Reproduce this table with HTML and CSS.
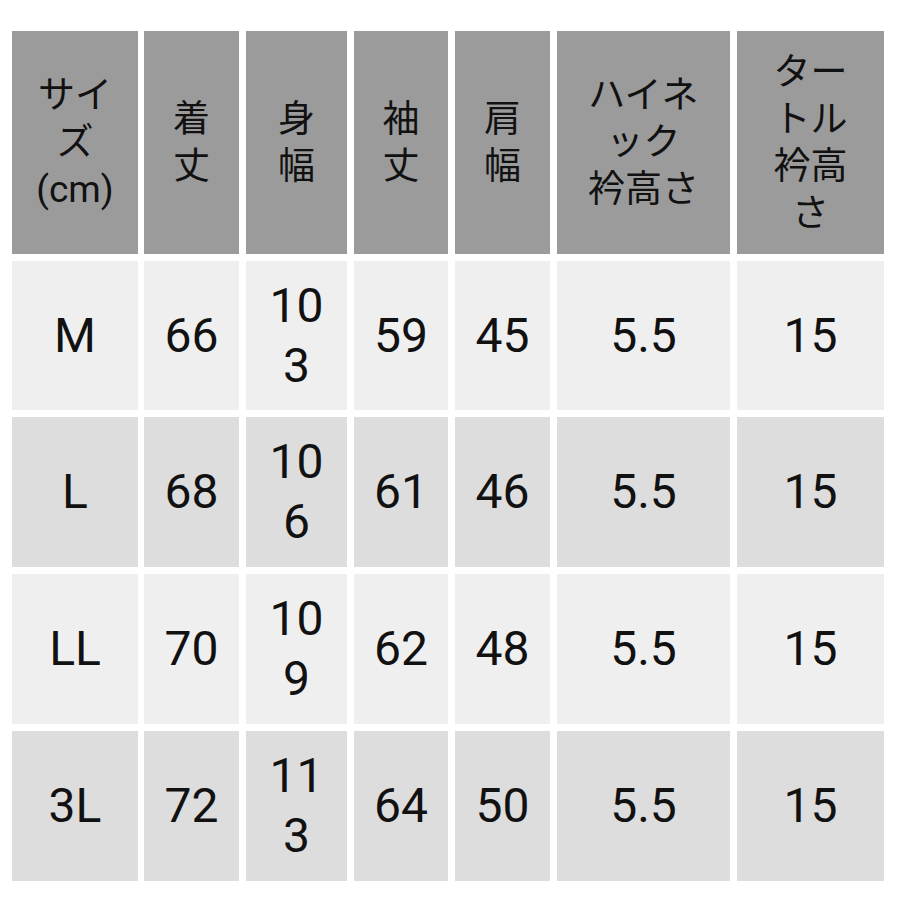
FILE: index.html
```html
<!DOCTYPE html>
<html lang="ja">
<head>
<meta charset="utf-8">
<title>サイズ表</title>
<link rel="stylesheet" href="styles.css">
</head>
<body>
<div class="size-table">
  <div class="cell head">サイ<br>ズ<br>(cm)</div>
  <div class="cell head">着<br>丈</div>
  <div class="cell head">身<br>幅</div>
  <div class="cell head">袖<br>丈</div>
  <div class="cell head">肩<br>幅</div>
  <div class="cell head">ハイネ<br>ック<br>衿高さ</div>
  <div class="cell head">ター<br>トル<br>衿高<br>さ</div>

  <div class="cell light">M</div>
  <div class="cell light">66</div>
  <div class="cell light">10<br>3</div>
  <div class="cell light">59</div>
  <div class="cell light">45</div>
  <div class="cell light">5.5</div>
  <div class="cell light">15</div>

  <div class="cell dark">L</div>
  <div class="cell dark">68</div>
  <div class="cell dark">10<br>6</div>
  <div class="cell dark">61</div>
  <div class="cell dark">46</div>
  <div class="cell dark">5.5</div>
  <div class="cell dark">15</div>

  <div class="cell light">LL</div>
  <div class="cell light">70</div>
  <div class="cell light">10<br>9</div>
  <div class="cell light">62</div>
  <div class="cell light">48</div>
  <div class="cell light">5.5</div>
  <div class="cell light">15</div>

  <div class="cell dark">3L</div>
  <div class="cell dark">72</div>
  <div class="cell dark">11<br>3</div>
  <div class="cell dark">64</div>
  <div class="cell dark">50</div>
  <div class="cell dark">5.5</div>
  <div class="cell dark">15</div>
</div>
</body>
</html>
```
FILE: styles.css
```css
html, body {
  margin: 0;
  padding: 0;
  background: #ffffff;
}

body {
  width: 900px;
  height: 900px;
  overflow: hidden;
}

.size-table {
  display: grid;
  grid-template-columns: 125px 95px 101px 94px 95px 173px 147px;
  grid-template-rows: 223px 149px 150px 150px 150px;
  column-gap: 7px;
  row-gap: 7px;
  padding: 31px 0 0 12px;
}

.size-table .cell:nth-child(7n+1) {
  margin-right: -1px;
}

.cell {
  display: flex;
  align-items: center;
  justify-content: center;
  text-align: center;
  color: #111111;
  font-family: Roboto, "Noto Sans", "Noto Sans CJK JP", sans-serif;
  font-size: 48px;
  line-height: 60px;
}

.head {
  background: #9b9b9b;
  font-family: Roboto, "Noto Sans CJK JP", sans-serif;
  font-size: 37px;
  line-height: 47px;
}

.light {
  background: #efefef;
}

.dark {
  background: #dddddd;
}
```
